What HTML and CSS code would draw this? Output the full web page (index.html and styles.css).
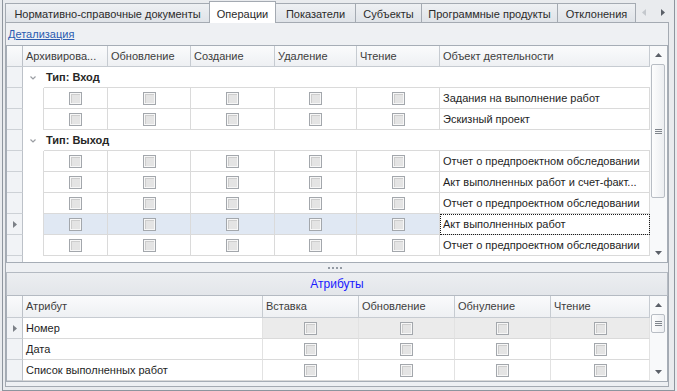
FILE: index.html
```html
<!DOCTYPE html>
<html lang="ru">
<head>
  <meta charset="UTF-8">
  <meta name="viewport" content="width=device-width, initial-scale=1.0">
  <title>Операции</title>
  <link rel="stylesheet" href="styles.css">
</head>
<body>
  <div class="frame">
    <!-- Вкладки -->
    <div class="tabs">
      <div class="tab w-nsi">Нормативно-справочные документы</div>
      <div class="tab active w-ops">Операции</div>
      <div class="tab w-ind">Показатели</div>
      <div class="tab w-sub">Субъекты</div>
      <div class="tab w-prog">Программные продукты</div>
      <div class="tab w-dev">Отклонения</div>
      <div class="tab-nav">
        <svg width="4" height="7"><path d="M4 0V7L0 3.5Z" fill="#c4c8cd"/></svg>
        <svg width="4" height="7"><path d="M0 0V7L4 3.5Z" fill="#5b6068"/></svg>
      </div>
    </div>

    <div class="page">
      <div class="toolbar"><a class="link" href="#">Детализация</a></div>

      <!-- Операции -->
      <div class="grid ops">
        <div class="gbody">
          <div class="hrow">
            <div class="hcell hind"></div>
            <div class="hcell">Архивирова...</div>
            <div class="hcell">Обновление</div>
            <div class="hcell">Создание</div>
            <div class="hcell">Удаление</div>
            <div class="hcell">Чтение</div>
            <div class="hcell">Объект деятельности</div>
          </div>

          <div class="group">
            <div class="ind"></div>
            <div class="chev"><svg width="6" height="4"><path d="M0.5 0.5L3 3L5.5 0.5" fill="none" stroke="#9b9ea3" stroke-width="1.2"/></svg></div>
            <div class="glabel">Тип: Вход</div>
          </div>
          <div class="row">
            <div class="ind"></div><div class="indent"></div>
            <div class="cell"><span class="cb"></span></div>
            <div class="cell"><span class="cb"></span></div>
            <div class="cell"><span class="cb"></span></div>
            <div class="cell"><span class="cb"></span></div>
            <div class="cell"><span class="cb"></span></div>
            <div class="cell text">Задания на выполнение работ</div>
          </div>
          <div class="row">
            <div class="ind"></div><div class="indent"></div>
            <div class="cell"><span class="cb"></span></div>
            <div class="cell"><span class="cb"></span></div>
            <div class="cell"><span class="cb"></span></div>
            <div class="cell"><span class="cb"></span></div>
            <div class="cell"><span class="cb"></span></div>
            <div class="cell text">Эскизный проект</div>
          </div>

          <div class="group">
            <div class="ind"></div>
            <div class="chev"><svg width="6" height="4"><path d="M0.5 0.5L3 3L5.5 0.5" fill="none" stroke="#9b9ea3" stroke-width="1.2"/></svg></div>
            <div class="glabel">Тип: Выход</div>
          </div>
          <div class="row">
            <div class="ind"></div><div class="indent"></div>
            <div class="cell"><span class="cb"></span></div>
            <div class="cell"><span class="cb"></span></div>
            <div class="cell"><span class="cb"></span></div>
            <div class="cell"><span class="cb"></span></div>
            <div class="cell"><span class="cb"></span></div>
            <div class="cell text">Отчет о предпроектном обследовании</div>
          </div>
          <div class="row">
            <div class="ind"></div><div class="indent"></div>
            <div class="cell"><span class="cb"></span></div>
            <div class="cell"><span class="cb"></span></div>
            <div class="cell"><span class="cb"></span></div>
            <div class="cell"><span class="cb"></span></div>
            <div class="cell"><span class="cb"></span></div>
            <div class="cell text">Акт выполненных работ и счет-факт...</div>
          </div>
          <div class="row">
            <div class="ind"></div><div class="indent"></div>
            <div class="cell"><span class="cb"></span></div>
            <div class="cell"><span class="cb"></span></div>
            <div class="cell"><span class="cb"></span></div>
            <div class="cell"><span class="cb"></span></div>
            <div class="cell"><span class="cb"></span></div>
            <div class="cell text">Отчет о предпроектном обследовании</div>
          </div>
          <div class="row sel">
            <div class="ind"><svg width="4" height="7"><path d="M0 0V7L4 3.5Z" fill="#7c8087"/></svg></div><div class="indent"></div>
            <div class="cell"><span class="cb"></span></div>
            <div class="cell"><span class="cb"></span></div>
            <div class="cell"><span class="cb"></span></div>
            <div class="cell"><span class="cb"></span></div>
            <div class="cell"><span class="cb"></span></div>
            <div class="cell text focus">Акт выполненных работ</div>
          </div>
          <div class="row">
            <div class="ind"></div><div class="indent"></div>
            <div class="cell"><span class="cb"></span></div>
            <div class="cell"><span class="cb"></span></div>
            <div class="cell"><span class="cb"></span></div>
            <div class="cell"><span class="cb"></span></div>
            <div class="cell"><span class="cb"></span></div>
            <div class="cell text">Отчет о предпроектном обследовании</div>
          </div>
          <div class="filler"><div class="ind"></div><div></div></div>
        </div>

        <div class="vscroll">
          <div class="sbtn"><svg width="7" height="4"><path d="M0 4H7L3.5 0Z" fill="#5b6068"/></svg></div>
          <div class="thumb"><svg width="7" height="5"><path d="M0 0.5H7M0 2.5H7M0 4.5H7" stroke="#80858c"/></svg></div>
          <div class="track"></div>
          <div class="sbtn"><svg width="7" height="4"><path d="M0 0H7L3.5 4Z" fill="#5b6068"/></svg></div>
        </div>
      </div>

      <div class="splitter"><div class="dots"></div></div>

      <!-- Атрибуты -->
      <div class="attrs">
        <div class="attrs-title">Атрибуты</div>
        <div class="grid">
          <div class="gbody">
            <div class="hrow">
              <div class="hcell hind"></div>
              <div class="hcell">Атрибут</div>
              <div class="hcell">Вставка</div>
              <div class="hcell">Обновление</div>
              <div class="hcell">Обнуление</div>
              <div class="hcell">Чтение</div>
            </div>
            <div class="row cur">
              <div class="ind"><svg width="4" height="7"><path d="M0 0V7L4 3.5Z" fill="#7c8087"/></svg></div>
              <div class="cell text">Номер</div>
              <div class="cell"><span class="cb"></span></div>
              <div class="cell"><span class="cb"></span></div>
              <div class="cell"><span class="cb"></span></div>
              <div class="cell"><span class="cb"></span></div>
            </div>
            <div class="row">
              <div class="ind"></div>
              <div class="cell text">Дата</div>
              <div class="cell"><span class="cb"></span></div>
              <div class="cell"><span class="cb"></span></div>
              <div class="cell"><span class="cb"></span></div>
              <div class="cell"><span class="cb"></span></div>
            </div>
            <div class="row">
              <div class="ind"></div>
              <div class="cell text">Список выполненных работ</div>
              <div class="cell"><span class="cb"></span></div>
              <div class="cell"><span class="cb"></span></div>
              <div class="cell"><span class="cb"></span></div>
              <div class="cell"><span class="cb"></span></div>
            </div>
          </div>

          <div class="vscroll">
            <div class="sbtn"><svg width="7" height="4"><path d="M0 4H7L3.5 0Z" fill="#5b6068"/></svg></div>
            <div class="thumb"><svg width="7" height="5"><path d="M0 0.5H7M0 2.5H7M0 4.5H7" stroke="#80858c"/></svg></div>
            <div class="track"></div>
            <div class="sbtn"><svg width="7" height="4"><path d="M0 0H7L3.5 4Z" fill="#5b6068"/></svg></div>
          </div>
        </div>
      </div>
    </div>
  </div>
</body>
</html>
```

FILE: styles.css
```css
* {
  box-sizing: border-box;
}

body {
  margin: 0;
  background-color: #e9ebee;
  font-family: "Liberation Sans", Arial, sans-serif;
  font-size: 11px;
  color: #1e1e1e;
}

.frame {
  margin-left: 2px;
  width: 673px;
  height: 391px;
  padding: 0 5px 3px 2px;
  border: 1px solid #8e959e;
  border-top: none;
}

/* Вкладки */
.tabs {
  display: flex;
  align-items: flex-end;
  height: 22px;
}

.tab {
  height: 19px;
  margin-right: -1px;
  padding-top: 2px;
  border: 1px solid #a4aab2;
  border-bottom: none;
  background: linear-gradient(#eef0f3, #dfe3e8);
  text-align: center;
  line-height: 16px;
  color: #2b2b2b;
  white-space: nowrap;
}

.tab.active {
  position: relative;
  z-index: 1;
  height: 22px;
  margin-bottom: -1px;
  padding-top: 3px;
  line-height: 18px;
  background: #fff;
}

.w-nsi { width: 205px; }
.w-ops { width: 67px; }
.w-ind { width: 81px; }
.w-sub { width: 67px; }
.w-prog { width: 137px; }
.w-dev { width: 79px; }

.tab-nav {
  display: flex;
  gap: 15px;
  align-self: flex-start;
  margin: 9px 4px 0 auto;
}

.tab-nav svg,
.sbtn svg,
.thumb svg,
.chev svg,
.ind svg {
  display: block;
}

.page {
  height: 365px;
  border: 1px solid #a4aab2;
  background-color: #eef0f3;
}

.toolbar {
  height: 22px;
  padding: 5px 0 0 2px;
  line-height: 13px;
}

.link {
  color: #2a5bb0;
  text-decoration: underline;
}

/* Таблицы */
.grid {
  display: flex;
  border: 1px solid #a6adb6;
  background-color: #fff;
}

.ops {
  height: 218px;
}

.gbody {
  flex: 1;
  min-width: 0;
}

.hrow {
  display: grid;
  height: 21px;
  border-bottom: 1px solid #c6cbd1;
  background: linear-gradient(#fafbfc, #eef0f3);
}

.ops .hrow {
  grid-template-columns: 16px 85px 83px 84px 82px 83px 210px;
}

.hcell {
  padding-left: 3px;
  border-right: 1px solid #c6cbd1;
  line-height: 20px;
  color: #3d3d3d;
  white-space: nowrap;
  overflow: hidden;
}

.hcell.hind {
  border-right-color: #bcc1c8;
}

.row {
  display: grid;
  height: 21px;
}

.ops .row {
  grid-template-columns: 16px 21px 64px 83px 84px 82px 83px 210px;
}

.ind {
  display: flex;
  align-items: center;
  justify-content: center;
  background-color: #f1f3f6;
  border-right: 1px solid #bcc1c8;
  border-bottom: 1px solid #cdd1d6;
}

.indent {
  border-right: 1px solid #dadada;
}

.cell {
  display: flex;
  align-items: center;
  justify-content: center;
  border-right: 1px solid #dadada;
  border-bottom: 1px solid #dadada;
}

.cell.text {
  display: block;
  padding-left: 3px;
  line-height: 20px;
  white-space: nowrap;
  overflow: hidden;
  text-overflow: ellipsis;
}

.row.sel .cell {
  background-color: #e0e8f3;
}

.row.sel .cell.focus {
  background-color: #fff;
  outline: 1px dotted #1a1a1a;
  outline-offset: -1px;
}

.group {
  display: grid;
  grid-template-columns: 16px 21px 1fr;
  height: 21px;
}

.chev {
  padding: 9px 0 0 7px;
}

.glabel {
  padding-left: 2px;
  border-bottom: 1px solid #dadada;
  font-weight: bold;
  line-height: 20px;
  color: #262626;
}

.filler {
  display: grid;
  grid-template-columns: 16px 1fr;
  height: 6px;
}

.filler .ind {
  border-bottom: none;
}

.cb {
  width: 13px;
  height: 13px;
  border: 1px solid #a3a7ac;
  background-color: #e4e4e4;
  box-shadow: inset 0 0 0 1px #f7f7f7, inset 2px 2px 0 #cdcdcd;
}

/* Полоса прокрутки */
.vscroll {
  display: flex;
  flex-direction: column;
  width: 17px;
  background-color: #f8f9fa;
}

.sbtn {
  display: flex;
  align-items: center;
  justify-content: center;
  height: 18px;
}

.thumb {
  display: flex;
  align-items: center;
  justify-content: center;
  margin: 0 2px 0 1px;
  border: 1px solid #b8bdc4;
  border-radius: 2px;
  background: linear-gradient(90deg, #fdfdfd, #eceef1);
}

.ops .thumb {
  height: 134px;
}

.track {
  flex: 1;
}

/* Разделитель */
.splitter {
  display: flex;
  align-items: center;
  justify-content: center;
  height: 9px;
  padding-right: 5px;
}

.dots {
  width: 14px;
  height: 2px;
  background: repeating-linear-gradient(90deg, #939aa3 0 2px, transparent 2px 4px);
}

/* Атрибуты */
.attrs-title {
  height: 24px;
  border: 1px solid #b4bac2;
  background: linear-gradient(#eceef1, #e3e6ea);
  text-align: center;
  font-size: 12px;
  line-height: 22px;
  color: #1a1aff;
}

.attrs .grid {
  height: 86px;
  border-top: none;
}

.attrs .hrow {
  height: 22px;
  grid-template-columns: 16px 240px 96px 96px 96px 99px;
}

.attrs .hcell {
  line-height: 21px;
}

.attrs .row {
  grid-template-columns: 16px 240px 96px 96px 96px 99px;
}

.attrs .cell {
  border-right-color: #e2e2e2;
}

.attrs .row.cur .cell {
  background-color: #ebebeb;
}

.attrs .row.cur .cell.text {
  background-color: #fff;
}

.attrs .thumb {
  height: 19px;
}
```
